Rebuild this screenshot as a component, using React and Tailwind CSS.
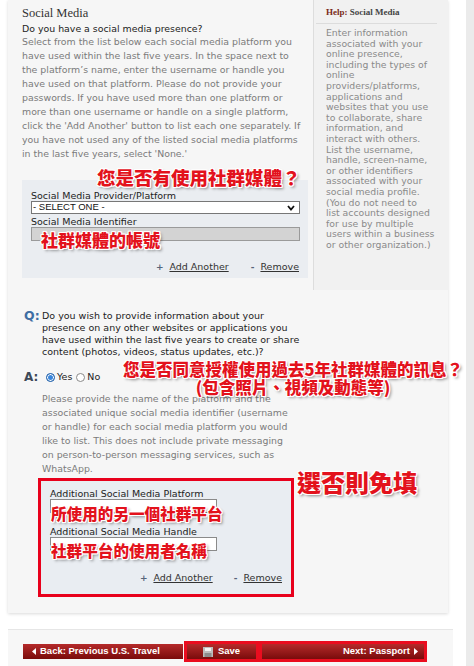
const ann =
  "font-['Noto_Sans_CJK_TC','Noto_Sans_CJK_SC',sans-serif] font-black text-[#e3121c] whitespace-nowrap [text-shadow:1px_0_0_#fff,-1px_0_0_#fff,0_1px_0_#fff,0_-1px_0_#fff,1px_1px_0_#fff,-1px_-1px_0_#fff,1px_-1px_0_#fff,-1px_1px_0_#fff,2px_2px_3px_rgba(0,0,0,0.45)]";

const intro = [
  "Select from the list below each social media platform you",
  "have used within the last five years. In the space next to",
  "the platform\u2019s name, enter the username or handle you",
  "have used on that platform. Please do not provide your",
  "passwords. If you have used more than one platform or",
  "more than one username or handle on a single platform,",
  "click the 'Add Another' button to list each one separately. If",
  "you have not used any of the listed social media platforms",
  "in the last five years, select 'None.'",
];

const help = [
  "Enter information",
  "associated with your",
  "online presence,",
  "including the types of",
  "online",
  "providers/platforms,",
  "applications and",
  "websites that you use",
  "to collaborate, share",
  "information, and",
  "interact with others.",
  "List the username,",
  "handle, screen-name,",
  "or other identifiers",
  "associated with your",
  "social media profile.",
  "(You do not need to",
  "list accounts designed",
  "for use by multiple",
  "users within a business",
  "or other organization.)",
];

const question = [
  "Do you wish to provide information about your",
  "presence on any other websites or applications you",
  "have used within the last five years to create or share",
  "content (photos, videos, status updates, etc.)?",
];

const details = [
  "Please provide the name of the platform and the",
  "associated unique social media identifier (username",
  "or handle) for each social media platform you would",
  "like to list. This does not include private messaging",
  "on person-to-person messaging services, such as",
  "WhatsApp.",
];

const Lines = ({ items }) => items.map((t, i) => <div key={i} className="whitespace-nowrap">{t}</div>);

const Links = ({ gap }) => (
  <div className={`flex justify-end items-center h-[13px] text-[9.5px] text-[#333] ${gap}`}>
    <span className="flex items-center gap-[6px]">
      <span className="text-[9px] font-bold text-[#56657a]">+</span>
      <span className="underline">Add Another</span>
    </span>
    <span className="flex items-center gap-[6px]">
      <span className="text-[9px] font-bold text-[#56657a]">-</span>
      <span className="underline">Remove</span>
    </span>
  </div>
);

const Tri = ({ dir }) => (
  <svg width="4" height="7" viewBox="0 0 4 7" className="shrink-0">
    {dir === "left" ? <path d="M4 0 L0 3.5 L4 7 Z" fill="#fff" /> : <path d="M0 0 L4 3.5 L0 7 Z" fill="#fff" />}
  </svg>
);

const redBtn = "bg-linear-to-b from-[#b52a2a] to-[#7a0b0b] text-white font-bold text-[9.5px] font-['Liberation_Sans',Arial,sans-serif]";

export default function App() {
  return (
    <div className="w-[474px] h-[666px] overflow-hidden bg-white flex font-['DejaVu_Sans',Verdana,sans-serif] text-[#222]">
      <div className="w-[466px] shrink-0 pl-[8px] flex flex-col">
        <div className="w-[440px] h-[613px] shrink-0 bg-[#f6f6f6] shadow-[0_1px_3px_rgba(0,0,0,0.15)] flex flex-col">
          {/* top: question + help */}
          <div className="flex h-[290px] shrink-0">
            <div className="w-[305px] pl-[14px] pt-[5px]">
              <h2 className="font-['Liberation_Serif',serif] text-[12.5px] leading-[16px] text-[#333]">Social Media</h2>
              <p className="mt-[1px] text-[9.4px] leading-[13px] whitespace-nowrap">Do you have a social media presence?</p>
              <div className="text-[9.4px] leading-[14px] text-[#7b7b7b]">
                <Lines items={intro} />
              </div>
              <div className="relative mt-[19px] w-[286px] h-[98px] bg-[#eaedf1] px-[9px] pt-[10px]">
                <div className={`absolute left-[75px] top-[-13px] text-[18.5px] leading-[20px] ${ann}`}>您是否有使用社群媒體？</div>
                <div className="text-[9.5px] leading-[11px] whitespace-nowrap">Social Media Provider/Platform</div>
                <div className="w-[269px] h-[13px] border border-[#777] bg-white flex items-center justify-between pl-[1px] pr-[4px] font-['Liberation_Sans',Arial,sans-serif] text-[9.5px] text-[#111]">
                  <span>- SELECT ONE -</span>
                  <svg width="8" height="6" viewBox="0 0 8 6">
                    <path d="M1 1 L4 4.5 L7 1" fill="none" stroke="#111" strokeWidth="1.8" />
                  </svg>
                </div>
                <div className="mt-[2px] text-[9.5px] leading-[11px] whitespace-nowrap">Social Media Identifier</div>
                <div className="relative w-[269px] h-[14px] border border-[#9a9a9a] bg-[#d3d3d3]">
                  <div className={`absolute left-[9px] top-[3px] text-[17px] leading-[18px] ${ann}`}>社群媒體的帳號</div>
                </div>
                <div className="mt-[20px]">
                  <Links gap="gap-[22px]" />
                </div>
              </div>
            </div>
            <div className="flex-1 border-l border-[#dddddd] bg-[#f1f1f1] pl-[2px] pr-[11px]">
              <div className="pl-[10px] pt-[5px] pb-[4px] border-b border-[#dcdcdc] font-['Liberation_Serif',serif] font-bold text-[9px] leading-[14px] whitespace-nowrap">
                <span className="text-[#7a2a18]">Help:</span> <span className="text-[#444]">Social Media</span>
              </div>
              <div className="pl-[10px] pt-[4px] text-[9.3px] leading-[10.6px] text-[#8a8a8a]">
                <Lines items={help} />
              </div>
            </div>
          </div>

          {/* follow-up question */}
          <div className="relative pl-[16px] pt-[20px]">
            <div className="flex">
              <span className="w-[18px] text-[12.5px] font-bold leading-[12px] text-[#3f6ea3]">Q:</span>
              <div className="text-[9.5px] leading-[12px]">
                <Lines items={question} />
              </div>
            </div>
            <div className="mt-[12px] h-[14px] flex items-center text-[9.5px]">
              <span className="w-[22px] text-[12px] font-bold text-[#3d4958]">A:</span>
              <span className="w-[9px] h-[9px] rounded-full border border-[#2763a8] bg-[#3a86dc] shadow-[inset_0_0_0_1px_#fff]" />
              <span className="ml-[2px]">Yes</span>
              <span className="ml-[4px] w-[9px] h-[9px] rounded-full border border-[#8a8a8a] bg-white" />
              <span className="ml-[2px]">No</span>
            </div>
            <div className={`absolute left-[115px] top-[70px] w-[340px] text-center text-[16.5px] leading-[18px] ${ann}`}>
              <div>您是否同意授權使用過去5年社群媒體的訊息？</div>
              <div>(包含照片、視頻及動態等)</div>
            </div>
            <div className="ml-[18px] mt-[8px] text-[9.4px] leading-[14px] text-[#7b7b7b]">
              <Lines items={details} />
            </div>
            <div className="relative ml-[14px] mt-[2px] w-[256px] h-[119px] border-[3px] border-[#e8001c] bg-[#e9edf2] px-[9px] pt-[7px]">
              <div className={`absolute left-[256px] top-[-12px] text-[24px] leading-[26px] ${ann}`}>選否則免填</div>
              <div className="text-[9.5px] leading-[11px] whitespace-nowrap">Additional Social Media Platform</div>
              <div className="relative w-[167px] h-[14px] border border-[#8a8a8a] bg-white">
                <div className={`absolute left-0 top-[5px] text-[15.6px] leading-[16px] ${ann}`}>所使用的另一個社群平台</div>
              </div>
              <div className="mt-[13px] text-[9.5px] leading-[11px] whitespace-nowrap">Additional Social Media Handle</div>
              <div className="relative w-[167px] h-[14px] border border-[#8a8a8a] bg-white">
                <div className={`absolute left-0 top-[4px] text-[15.6px] leading-[16px] ${ann}`}>社群平台的使用者名稱</div>
              </div>
              <div className="mt-[21px]">
                <Links gap="gap-[21px]" />
              </div>
            </div>
          </div>
        </div>

        {/* navigation */}
        <div className="mt-[16px] w-[445px] flex-1 bg-[#f7f7f7] border-t border-[#e6e6e6] pl-[15px] pt-[11px] flex items-start">
          <div className={`mt-[3px] w-[160px] h-[15px] flex items-center gap-[4px] pl-[9px] ${redBtn}`}>
            <Tri dir="left" />
            <span>Back: Previous U.S. Travel</span>
          </div>
          <div className="ml-[1px] w-[75px] h-[21px] bg-[#ea0d1f] p-[3px]">
            <div className={`h-full flex items-center justify-center gap-[5px] ${redBtn}`}>
              <svg width="10" height="10" viewBox="0 0 10 10">
                <rect x="0" y="0" width="10" height="10" fill="#bdbdbd" />
                <rect x="2" y="1" width="6" height="3" fill="#f2f2f2" />
                <rect x="1.5" y="6" width="7" height="4" fill="#8d8d8d" />
              </svg>
              <span>Save</span>
            </div>
          </div>
          <div className="w-[168px] h-[21px] bg-[#ea0d1f] p-[3px]">
            <div className={`h-full flex items-center justify-end gap-[4px] pr-[6px] ${redBtn}`}>
              <span>Next: Passport</span>
              <Tri dir="right" />
            </div>
          </div>
        </div>
      </div>
      <div className="flex-1 bg-[#ebebeb]" />
    </div>
  );
}
